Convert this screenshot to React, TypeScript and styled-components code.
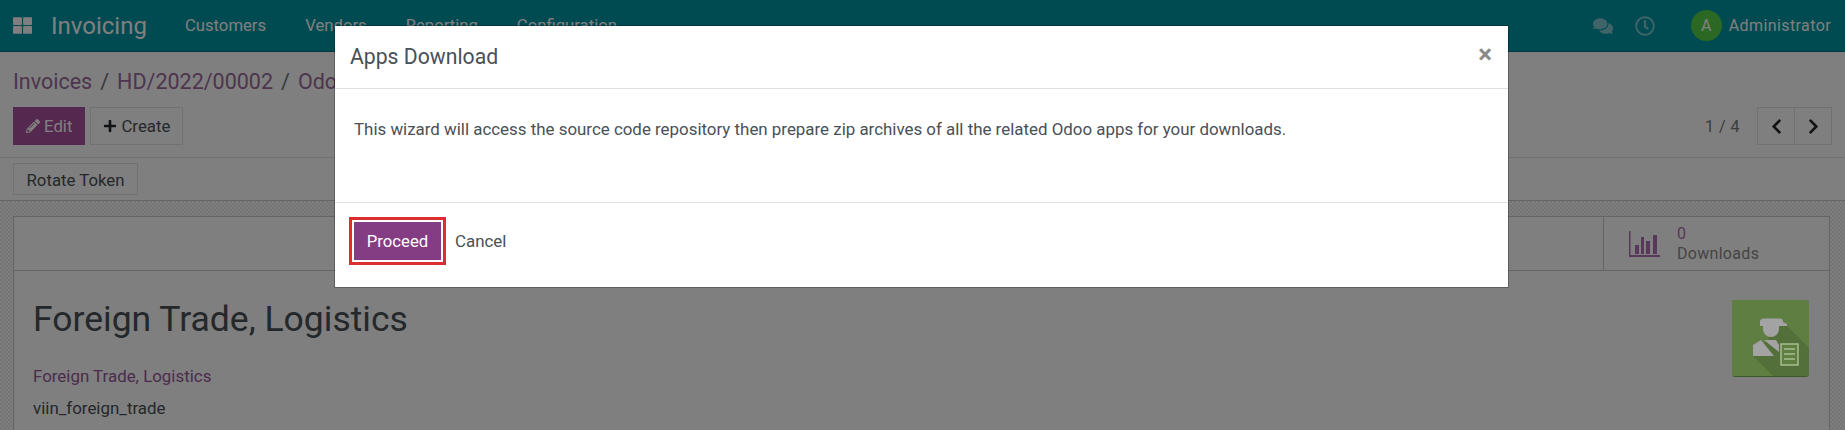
import styled, { createGlobalStyle } from "styled-components";
import {
  FaChevronLeft,
  FaChevronRight,
  FaComments,
  FaPencilAlt,
  FaPlus,
  FaRegClock,
  FaThLarge,
} from "react-icons/fa";

const GlobalStyle = createGlobalStyle`
  html, body {
    margin: 0;
    padding: 0;
    background: #808080;
    font-family: Roboto, "Noto Sans", sans-serif;
  }
`;

const Page = styled.div`
  position: relative;
  width: 1845px;
  height: 430px;
  overflow: hidden;
  background: #fff;
  color: #212529;
`;

const NavBar = styled.header`
  display: flex;
  align-items: center;
  height: 52px;
  box-sizing: border-box;
  padding: 0 14px 0 13px;
  background: #0094a4;
  border-bottom: 1px solid #00737f;
  color: #fff;
`;

const AppGrid = styled(FaThLarge)`
  width: 19px;
  height: 19px;
  margin-right: 19px;
`;

const Brand = styled.span`
  font-size: 24px;
  margin-right: 38px;
`;

const NavLink = styled.span`
  font-size: 16.7px;
  margin-right: 39px;
`;

const NavRight = styled.div`
  display: flex;
  align-items: center;
  margin-left: auto;
`;

const Systray = styled.span`
  display: flex;
  margin-right: 26px;
  opacity: 0.5;
  font-size: 20px;

  &:first-child {
    margin-right: 22px;
  }
`;

const Avatar = styled.span`
  display: flex;
  align-items: center;
  justify-content: center;
  width: 31px;
  height: 31px;
  margin: 0 7px 0 10px;
  border-radius: 50%;
  background: #54d048;
  font-size: 16px;
`;

const UserName = styled.span`
  font-size: 16px;
  letter-spacing: 0.4px;
`;

const ControlPanel = styled.section`
  height: 106px;
  box-sizing: border-box;
  padding: 18px 13px 0;
  border-bottom: 1px solid #dee2e6;
`;

const Breadcrumb = styled.div`
  height: 24px;
  font-size: 21.5px;
  line-height: 24px;
  color: #9a6a9c;
`;

const CrumbSep = styled.span`
  margin: 0 8px;
  color: #6c757d;
`;

const ActionRow = styled.div`
  display: flex;
  align-items: center;
  margin-top: 13px;
`;

const Button = styled.button<{ $primary?: boolean }>`
  display: inline-flex;
  align-items: center;
  gap: 4px;
  height: 38px;
  box-sizing: border-box;
  padding: 0 12px;
  margin-right: 5px;
  border: 1px solid ${(p) => (p.$primary ? "#a8509f" : "#dee2e6")};
  background: ${(p) => (p.$primary ? "#a8509f" : "#fff")};
  color: ${(p) => (p.$primary ? "#fff" : "#4a5056")};
  font: 16.8px Roboto, sans-serif;
`;

const Pager = styled.div`
  display: flex;
  align-items: center;
  margin-left: auto;
`;

const PagerText = styled.span`
  margin-right: 17px;
  font-size: 16px;
  letter-spacing: 0.5px;
  color: #777;
`;

const PagerGroup = styled.div`
  display: flex;
  height: 38px;
  border: 1px solid #dee2e6;
  box-sizing: border-box;
`;

const PagerButton = styled.span`
  display: flex;
  align-items: center;
  justify-content: center;
  width: 36px;
  font-size: 17px;
  color: #212529;

  & + & {
    border-left: 1px solid #dee2e6;
  }
`;

const StatusBar = styled.div`
  display: flex;
  align-items: center;
  height: 43px;
  box-sizing: border-box;
  padding: 0 13px;
  border-bottom: 1px solid #c8c8c8;
`;

const SmallButton = styled(Button)`
  height: 32px;
  padding: 1px 12.5px 0;
`;

const Backdrop = styled.main`
  height: 229px;
  box-sizing: border-box;
  padding: 15px 15px 0 13px;
  background-color: #fff;
  background-image: repeating-conic-gradient(#e8e8e8 0 25%, #fff 0 50%);
  background-size: 4px 4px;
`;

const Sheet = styled.article`
  height: 100%;
  border: 1px solid #c8c8c8;
  border-bottom: 0;
  background: #fff;
`;

const ButtonBox = styled.div`
  display: flex;
  justify-content: flex-end;
  height: 53px;
  border-bottom: 1px solid #c8c8c8;
`;

const StatButton = styled.div`
  display: flex;
  align-items: center;
  width: 226px;
  box-sizing: border-box;
  padding-left: 25px;
  border-left: 1px solid #c8c8c8;
`;

const StatIcon = styled.svg`
  width: 31px;
  height: 26px;
  margin-right: 17px;
  color: #b070b0;
`;

const StatText = styled.div`
  font-size: 16px;
  line-height: 20px;
  letter-spacing: 0.3px;
  color: #8a8a8a;
`;

const StatValue = styled.div`
  color: #b070b0;
`;

const SheetBody = styled.div`
  display: flex;
  justify-content: space-between;
  padding: 27px 20px 0 19px;
`;

const Title = styled.h1`
  margin: 0;
  font-size: 35.5px;
  font-weight: 400;
  line-height: 42px;
  color: #4a5056;
`;

const Category = styled.div`
  margin-top: 24px;
  font-size: 16.9px;
  line-height: 24px;
  color: #98589a;
`;

const TechName = styled.div`
  margin-top: 8px;
  font-size: 16.9px;
  line-height: 24px;
  color: #4a5056;
`;

const AppIcon = styled.svg`
  position: relative;
  z-index: 1;
  width: 77px;
  height: 77px;
  margin-top: 2px;
`;

const Overlay = styled.div`
  position: absolute;
  inset: 0;
  background: rgba(0, 0, 0, 0.5);
`;

const Modal = styled.div`
  position: absolute;
  z-index: 2;
  top: 26px;
  left: 335px;
  width: 1173px;
  height: 261px;
  background: #fff;
  box-shadow: 0 0 0 1px rgba(0, 0, 0, 0.25);
  color: #495057;
`;

const ModalHeader = styled.div`
  display: flex;
  align-items: center;
  justify-content: space-between;
  height: 63px;
  box-sizing: border-box;
  padding: 0 16px 1px 15px;
  border-bottom: 1px solid #dee2e6;
`;

const ModalTitle = styled.h4`
  margin: 0;
  font-size: 21.2px;
  font-weight: 400;
`;

const CloseButton = styled.span`
  margin-bottom: 6px;
  font-size: 26px;
  font-weight: 700;
  line-height: 1;
  color: #8a8a8a;
`;

const ModalBody = styled.div`
  height: 114px;
  box-sizing: border-box;
  padding: 28px 19px 0;
  border-bottom: 1px solid #dee2e6;
  font-size: 16.9px;
  line-height: 24px;
`;

const ModalFooter = styled.div`
  display: flex;
  align-items: center;
  padding: 14px 14px;
`;

const ProceedButton = styled.button`
  width: 97px;
  height: 48px;
  padding: 0;
  border: 3px solid #dc2e2e;
  box-shadow: inset 0 0 0 2px #fff;
  background: #843d83;
  color: #fff;
  font: 16.7px Roboto, sans-serif;
`;

const CancelButton = styled.span`
  margin-left: 9px;
  font-size: 16.9px;
`;

export default function App() {
  return (
    <Page>
      <GlobalStyle />
      <NavBar>
        <AppGrid />
        <Brand>Invoicing</Brand>
        <NavLink>Customers</NavLink>
        <NavLink>Vendors</NavLink>
        <NavLink>Reporting</NavLink>
        <NavLink>Configuration</NavLink>
        <NavRight>
          <Systray>
            <FaComments />
          </Systray>
          <Systray>
            <FaRegClock />
          </Systray>
          <Avatar>A</Avatar>
          <UserName>Administrator</UserName>
        </NavRight>
      </NavBar>
      <ControlPanel>
        <Breadcrumb>
          Invoices<CrumbSep>/</CrumbSep>HD/2022/00002<CrumbSep>/</CrumbSep>Odoo
        </Breadcrumb>
        <ActionRow>
          <Button $primary>
            <FaPencilAlt size={14} /> Edit
          </Button>
          <Button>
            <FaPlus size={14} color="#212529" /> Create
          </Button>
          <Pager>
            <PagerText>1 / 4</PagerText>
            <PagerGroup>
              <PagerButton>
                <FaChevronLeft />
              </PagerButton>
              <PagerButton>
                <FaChevronRight />
              </PagerButton>
            </PagerGroup>
          </Pager>
        </ActionRow>
      </ControlPanel>
      <StatusBar>
        <SmallButton>Rotate Token</SmallButton>
      </StatusBar>
      <Backdrop>
        <Sheet>
          <ButtonBox>
            <StatButton>
              <StatIcon viewBox="0 0 31 26" fill="currentColor">
                <path d="M0 0h1.5v24H31v2H0z" />
                <rect x="6" y="14" width="4" height="9" />
                <rect x="12" y="6" width="3" height="17" />
                <rect x="17" y="10" width="4" height="13" />
                <rect x="24" y="4" width="4" height="19" />
              </StatIcon>
              <StatText>
                <StatValue>0</StatValue>
                Downloads
              </StatText>
            </StatButton>
          </ButtonBox>
          <SheetBody>
            <div>
              <Title>Foreign Trade, Logistics</Title>
              <Category>Foreign Trade, Logistics</Category>
              <TechName>viin_foreign_trade</TechName>
            </div>
            <AppIcon viewBox="0 0 77 77">
              <rect width="77" height="77" rx="3" fill="#3f5a2a" />
              <path d="M3 0h71a3 3 0 0 1 3 3v72a1 1 0 0 1-1 1H1a1 1 0 0 1-1-1V3a3 3 0 0 1 3-3z" fill="#5f7f42" />
              <path d="M51 22l26 26v27a1 1 0 0 1-1 1H41L21 56z" fill="#536f3a" />
              <path d="M28 22c0-3 2-3.500 5-3.500h14c3 0 4 .5 4 3.500l4 2v2H28z" fill="#a3a3a3" />
              <path d="M31 26h16v3a8 8 0 0 1-16 0z" fill="#a3a3a3" />
              <path d="M21 45l8-5 13 16H21z" fill="#a3a3a3" />
              <path d="M32 40h12l3 5v7z" fill="#a3a3a3" />
              <rect x="49" y="44" width="17" height="21" fill="#5f7f42" stroke="#a9bd93" strokeWidth="1.5" />
              <path d="M52 49h11M52 54h11M52 59h11" stroke="#a9bd93" strokeWidth="1.5" />
            </AppIcon>
          </SheetBody>
        </Sheet>
      </Backdrop>
      <Overlay />
      <Modal>
        <ModalHeader>
          <ModalTitle>Apps Download</ModalTitle>
          <CloseButton>×</CloseButton>
        </ModalHeader>
        <ModalBody>
          This wizard will access the source code repository then prepare zip
          archives of all the related Odoo apps for your downloads.
        </ModalBody>
        <ModalFooter>
          <ProceedButton>Proceed</ProceedButton>
          <CancelButton>Cancel</CancelButton>
        </ModalFooter>
      </Modal>
    </Page>
  );
}
